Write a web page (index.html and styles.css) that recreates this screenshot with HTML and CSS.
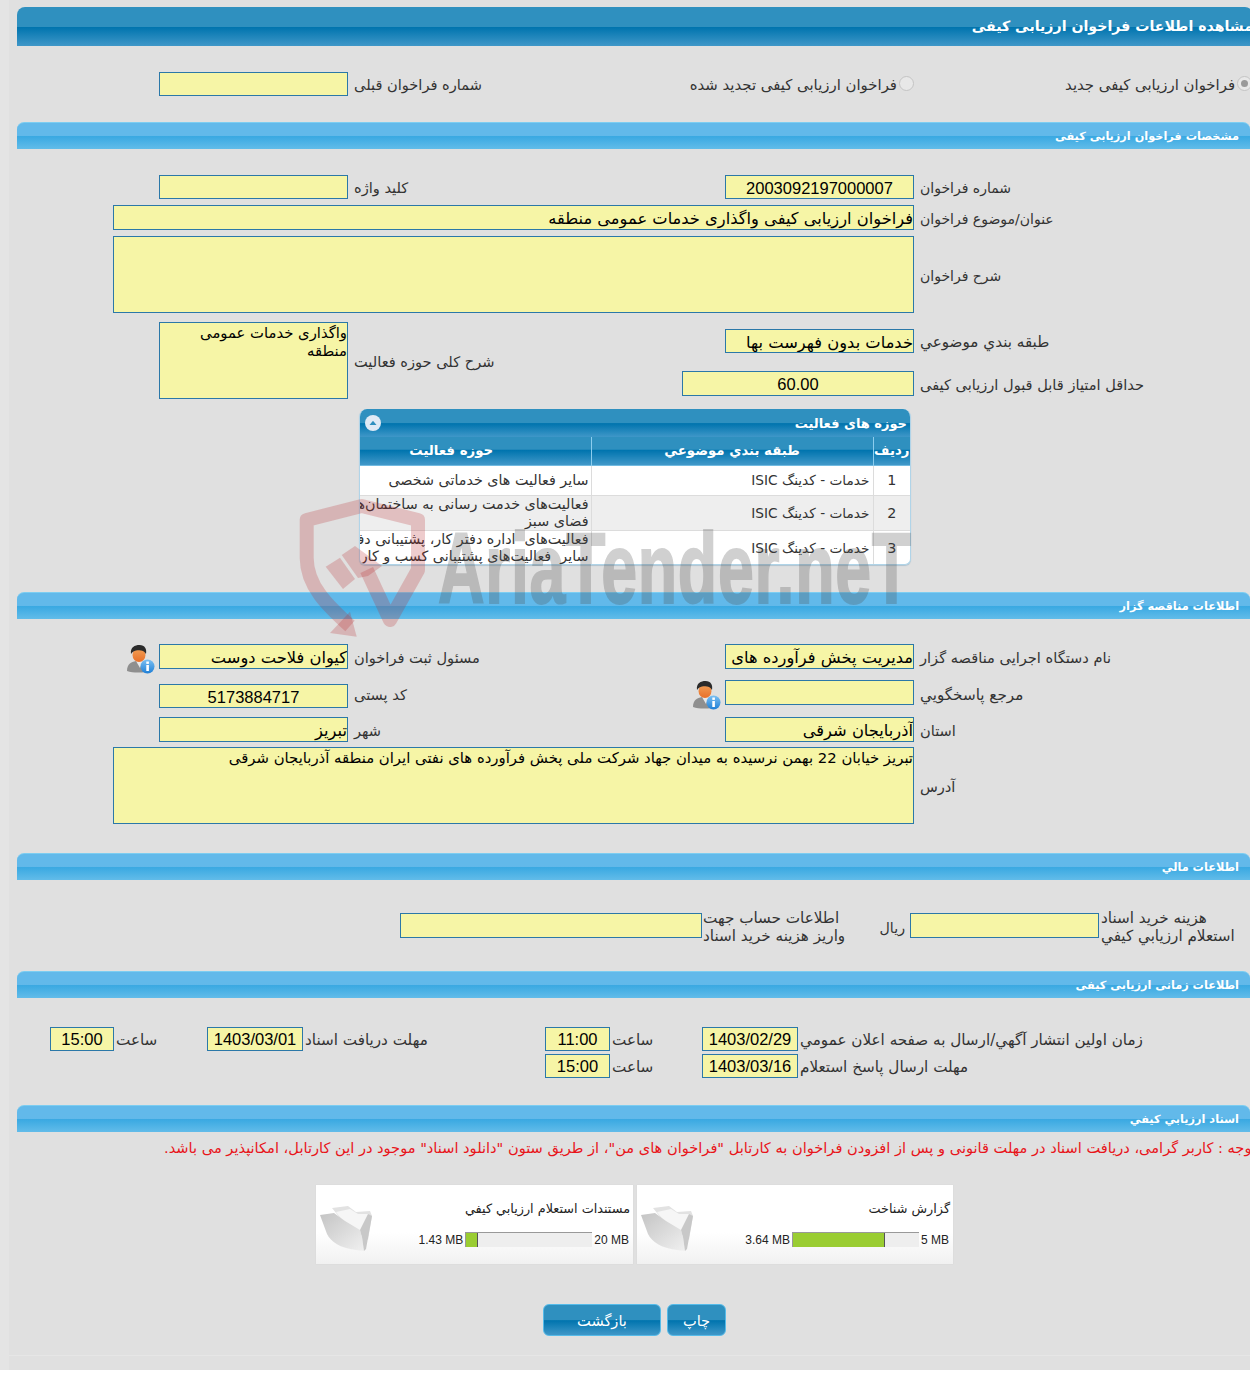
FILE: index.html
```html
<!DOCTYPE html>
<html lang="fa">
<head>
<meta charset="utf-8">
<title>مشاهده اطلاعات فراخوان ارزیابی کیفی</title>
<link rel="stylesheet" href="styles.css">
</head>
<body>
<div class="page">
<main class="main">
  <h1 class="title-bar">مشاهده اطلاعات فراخوان ارزیابی کیفی</h1>

  <div class="row radio-row">
    <div class="field c-left"></div>
    <div class="label l-left">شماره فراخوان قبلی</div>
    <div class="radio-opt r-mid"><span class="radio"></span><span>فراخوان ارزیابی کیفی تجدید شده</span></div>
    <div class="radio-opt r-right"><span class="radio checked"></span><span>فراخوان ارزیابی کیفی جدید</span></div>
  </div>

  <h2 class="sec-head">مشخصات فراخوان ارزیابی کیفی</h2>
  <div class="sec-body">
    <div class="row gap6">
      <div class="field c-left"></div>
      <div class="label l-left">کلید واژه</div>
      <div class="field c-right num">2003092197000007</div>
      <div class="label l-right sm">شماره فراخوان</div>
    </div>
    <div class="row gap6">
      <div class="field wide h25 val">فراخوان ارزیابی کیفی واگذاری خدمات عمومی منطقه</div>
      <div class="label l-right sm">عنوان/موضوع فراخوان</div>
    </div>
    <div class="row gap9">
      <div class="field wide area"></div>
      <div class="label l-right sm">شرح فراخوان</div>
    </div>
    <div class="row block-row">
      <div class="field c-left area span-all val-wrap">واگذاری خدمات عمومی منطقه</div>
      <div class="label l-left span-all">شرح کلی حوزه فعالیت</div>
      <div class="field c-right val row-2">خدمات بدون فهرست بها</div>
      <div class="label l-right row-2 lg">طبقه بندي موضوعي</div>
      <div class="field score num row-4">60.00</div>
      <div class="label l-right row-4">حداقل امتیاز قابل قبول ارزیابی کیفی</div>
    </div>

    <section class="grid-box">
      <div class="grid-title">
        <span class="collapse"><svg viewBox="0 0 12 12" width="12" height="12"><path d="M2.5 8 L6 3.8 L9.5 8 Z" fill="#2f90bf"/></svg></span>
        <span>حوزه های فعالیت</span>
      </div>
      <table class="grid">
        <thead>
          <tr><th class="col-n">ردیف</th><th class="col-c">طبقه بندي موضوعي</th><th class="col-a">حوزه فعالیت</th></tr>
        </thead>
        <tbody>
          <tr class="r1"><td class="n">1</td><td class="t">خدمات - کدینگ ISIC</td><td class="a"><div>سایر فعالیت های خدماتی شخصی</div></td></tr>
          <tr class="r2 alt"><td class="n">2</td><td class="t">خدمات - کدینگ ISIC</td><td class="a"><div>فعالیت‌های خدمت رسانی به ساختمان‌ها و</div><div>فضای سبز</div></td></tr>
          <tr class="r3"><td class="n">3</td><td class="t">خدمات - کدینگ ISIC</td><td class="a"><div>فعالیت‌های&nbsp; اداره دفتر کار، پشتیبانی دفتر</div><div>سایر&nbsp; فعالیت‌های پشتیبانی کسب و کار</div></td></tr>
        </tbody>
      </table>
    </section>
  </div>

  <h2 class="sec-head">اطلاعات مناقصه گزار</h2>
  <div class="sec-body sec-body-tight">
    <div class="row gap11">
      <svg class="person p-left" viewBox="0 0 30 30" width="30" height="30"><use href="#person"/></svg>
      <div class="field c-left h25 val">کیوان فلاحت دوست</div>
      <div class="label l-left">مسئول ثبت فراخوان</div>
      <div class="field c-right h25 val">مدیریت پخش فرآورده های نفتی منطقه آذربایجان شرقی</div>
      <div class="label l-right">نام دستگاه اجرایی مناقصه گزار</div>
    </div>
    <div class="row gap9 tall">
      <div class="field c-left to-end num">5173884717</div>
      <div class="label l-left">کد پستی</div>
      <svg class="person p-mid" viewBox="0 0 30 30" width="30" height="30"><use href="#person"/></svg>
      <div class="field c-right h25 to-start"></div>
      <div class="label l-right lg">مرجع پاسخگويي</div>
    </div>
    <div class="row gap5">
      <div class="field c-left h25 val">تبریز</div>
      <div class="label l-left">شهر</div>
      <div class="field c-right h25 val">آذربایجان شرقی</div>
      <div class="label l-right">استان</div>
    </div>
    <div class="row">
      <div class="field wide area val-line">تبریز خیابان 22 بهمن نرسیده به میدان جهاد شرکت ملی پخش فرآورده های نفتی ایران منطقه آذربایجان شرقی</div>
      <div class="label l-right">آدرس</div>
    </div>
  </div>

  <h2 class="sec-head head-fin">اطلاعات مالي</h2>
  <div class="fin-row">
    <div class="field fin-a"></div>
    <div class="label fin-l1">اطلاعات حساب جهت<br>واریز هزینه خرید اسناد</div>
    <div class="label fin-u">ريال</div>
    <div class="field fin-b"></div>
    <div class="label fin-l2">هزینه خرید اسناد<br>استعلام ارزیابي کیفي</div>
  </div>

  <h2 class="sec-head">اطلاعات زمانی ارزیابی کیفی</h2>
  <div class="time-grid">
    <div class="field num t-1">15:00</div>
    <div class="label t-2">ساعت</div>
    <div class="field num t-3">1403/03/01</div>
    <div class="label t-4">مهلت دریافت اسناد</div>
    <div class="field num t-5">11:00</div>
    <div class="label t-6">ساعت</div>
    <div class="field num t-7">1403/02/29</div>
    <div class="label t-8">زمان اولین انتشار آگهي/ارسال به صفحه اعلان عمومي</div>
    <div class="field num t-5">15:00</div>
    <div class="label t-6">ساعت</div>
    <div class="field num t-7">1403/03/16</div>
    <div class="label t-8">مهلت ارسال پاسخ استعلام</div>
  </div>

  <h2 class="sec-head">اسناد ارزیابي کیفي</h2>
  <p class="notice">توجه : کاربر گرامی، دریافت اسناد در مهلت قانونی و پس از افزودن فراخوان به کارتابل "فراخوان های من"، از طریق ستون "دانلود اسناد" موجود در این کارتابل، امکانپذیر می باشد.</p>

  <div class="cards">
    <div class="card">
      <svg class="folder" viewBox="0 0 56 48" width="56" height="48"><use href="#folder"/></svg>
      <div class="card-info">
        <div class="card-title">مستندات استعلام ارزیابي کیفي</div>
        <div class="meter-row">
          <span>1.43 MB</span>
          <div class="meter"><div class="meter-fill" style="width:9%"></div></div>
          <span>20 MB</span>
        </div>
      </div>
    </div>
    <div class="card">
      <svg class="folder" viewBox="0 0 56 48" width="56" height="48"><use href="#folder"/></svg>
      <div class="card-info">
        <div class="card-title">گزارش شناخت</div>
        <div class="meter-row">
          <span>3.64 MB</span>
          <div class="meter"><div class="meter-fill" style="width:73%"></div></div>
          <span>5 MB</span>
        </div>
      </div>
    </div>
  </div>

  <div class="buttons">
    <button class="btn btn-back" type="button">بازگشت</button>
    <button class="btn btn-print" type="button">چاپ</button>
  </div>
</main>
<div class="foot-line"></div>

<svg class="wm-shield" viewBox="0 0 132 142" width="132" height="142">
  <g fill="none" stroke="#b8292f" stroke-width="14" stroke-opacity=".24" stroke-linejoin="round">
    <path d="M52 128 C30 108 8.700 88 8.700 60 L8.700 22 L63.700 8 L120 22 L120 72 L92 122 L68.700 72"/>
  </g>
  <g fill="#b8292f" fill-opacity=".24">
    <polygon points="32,135 58.700,138.700 52,113.700"/>
    <polygon points="27.700,68.700 42,59.700 57,81 45,91"/>
    <polygon points="43.700,57 57,48 84,68 70,78 60,80"/>
  </g>
</svg>
<div class="wm-text">AriaTender.neT</div>

<svg class="defs" width="0" height="0">
  <defs>
    <linearGradient id="fg2" x1="0" y1="0" x2="1" y2="1"><stop offset="0" stop-color="#c4c4c4"/><stop offset="1" stop-color="#f0f0f0"/></linearGradient>
    <linearGradient id="pg" x1="0" y1="0" x2="0" y2="1"><stop offset="0" stop-color="#f2a056"/><stop offset="1" stop-color="#e8702a"/></linearGradient>
    <linearGradient id="ig" x1="0" y1="0" x2="0" y2="1"><stop offset="0" stop-color="#7cc0f2"/><stop offset="1" stop-color="#1f7fd6"/></linearGradient>
    <symbol id="folder" viewBox="0 0 56 48">
      <path d="M14 4 L30 2 L38 8 L52 7 L54 12 L50 36 L22 14 Z" fill="#e2e2e2"/>
      <path d="M18 8 L32 5 L40 10 L50 10 L46 32 L24 16 Z" fill="#f6f6f6"/>
      <path d="M2 11 L16 9 L27 17 L42 26 L44 33 L46 47 L38 46 C22 44 13 38 9 30 Z" fill="url(#fg2)"/>
      <path d="M42 26 L50 10 L54 12 L48 45 L46 47 L44 33 Z" fill="#c8c8c8"/>
    </symbol>
    <symbol id="person" viewBox="0 0 30 30">
      <path d="M2 27 C2 20 6 18 11 17 L19 17 C24 18 26 21 26 27 C18 29 8 29 2 27 Z" fill="#8f8f8f"/>
      <path d="M11 17 L15 24 L18 17 Z" fill="#e8e8e8"/>
      <ellipse cx="14" cy="11" rx="6.500" ry="7" fill="url(#pg)"/>
      <path d="M6 10 C5 3 10 1 14.500 1 C20 1 22 5 21 10 C19 6 15 6 11 6.500 C9 7 7 8 6 10 Z" fill="#2b2b2b"/>
      <circle cx="22.500" cy="22.500" r="7" fill="url(#ig)"/>
      <rect x="21.300" y="21" width="2.600" height="6" fill="#fff"/>
      <rect x="21.300" y="17.500" width="2.600" height="2.400" fill="#fff"/>
    </symbol>
  </defs>
</svg>
</div>
</body>
</html>
```
FILE: styles.css
```css
* { box-sizing: border-box; }
html, body { margin: 0; padding: 0; background: #fff; }
body { font-family: "DejaVu Sans", Tahoma, sans-serif; font-size: 14.600px; color: #333; }
.page { position: relative; width: 1250px; height: 1378px; overflow: hidden; background: #fff; }
.main {
  height: 1370px; width: 1250px; padding: 7px 0 0 8px; overflow: hidden;
  background: #e0e0e0;
  border-left: 9px solid #e4e4e4;
}

.title-bar {
  margin: 0 -3px 26px 0; height: 39px; padding: 0; direction: rtl;
  font-size: 14.150px; font-weight: bold; color: #fff; line-height: 39px;
  border-radius: 8px 8px 0 0; white-space: nowrap; overflow: hidden;
  background: linear-gradient(#2f90bf 0, #2f90bf 50%, #0074ae 52%, #3f97c8 100%);
}
.sec-head {
  margin: 0; height: 27px; padding: 0 11px 0 0; direction: rtl;
  font-size: 11.300px; font-weight: bold; color: #fff; line-height: 27px;
  border-radius: 7px 7px 0 0; border-top: 1px solid #7ccdf1;
  background: linear-gradient(#62b9ea 0, #62b9ea 48%, #3aa9e2 52%, #62bce9 100%);
}
.sec-body { padding-top: 26px; }
.sec-body-tight { padding-top: 25px; }

.row {
  display: grid; align-items: center;
  grid-template-columns: 96px 46px 189px 377px 189px 1fr;
}
.gap5 { margin-bottom: 5px; }
.gap6 { margin-bottom: 6px; }
.gap9 { margin-bottom: 9px; }
.gap11 { margin-bottom: 11px; }
.radio-row { margin-bottom: 26px; }
.tall { grid-template-rows: 28px; }
.to-start { align-self: start; }
.to-end { align-self: end; }

.field {
  height: 24px; background: #f6f5a6; border: 1px solid #2b78a8; overflow: hidden;
  direction: rtl; color: #000;
}
.h25 { height: 25px; }
.c-left { grid-column: 3; grid-row: 1; }
.c-right { grid-column: 5; grid-row: 1; }
.wide { grid-column: 2 / 6; grid-row: 1; }
.area { height: 77px; }
.label { direction: rtl; text-align: left; white-space: nowrap; line-height: 18px; padding-top: 2px; }
.sm { font-size: 14px; }
.lg { font-size: 15.200px; }
.l-left { grid-column: 4; grid-row: 1; padding-left: 6px; justify-self: start; }
.l-right { grid-column: 6; grid-row: 1; padding-left: 6px; justify-self: start; }
.num { text-align: center; font-family: "Liberation Sans", sans-serif; font-size: 16.500px; line-height: 24px; }
.val { font-size: 16.300px; line-height: 25px; white-space: nowrap; }
.val-wrap { font-size: 14.800px; line-height: 18px; padding-top: 1px; }
.val-line { font-size: 14.850px; line-height: 20px; white-space: nowrap; }

.radio-opt { display: flex; align-items: center; gap: 2px; direction: rtl; white-space: nowrap; grid-row: 1; height: 24px; font-size: 14.900px; padding-top: 2px; }
.r-mid { grid-column: 4 / 6; justify-self: end; }
.r-right { grid-column: 6; justify-self: end; margin-right: -2px; }
.radio { width: 15px; height: 15px; border-radius: 50%; border: 1px solid #c4c4c4; background: #e8e8e8; margin-top: -3px; position: relative; }
.radio.checked::after { content: ""; position: absolute; inset: 3px; border-radius: 50%; background: #9a9a9a; }

.block-row { grid-template-rows: 7px 24px 18px 25px 3px; margin-bottom: 10px; }
.span-all { grid-row: 1 / -1; }
.row-2 { grid-row: 2; }
.row-4 { grid-row: 4; }
.score { grid-column: 4 / 6; justify-self: end; width: 232px; height: 25px; }

.grid-box {
  margin: 0 0 27px 342px; width: 552px; height: 156px; border: 1px solid #b0d4e8; border-top: 0;
  border-radius: 8px 8px 6px 6px; overflow: hidden; background: #fff; box-shadow: 0 1px 1px #b0c4d0;
}
.grid-title {
  height: 28px; display: flex; justify-content: space-between; align-items: center;
  padding: 0 3px 0 5px; color: #fff; font-weight: bold; font-size: 13px; direction: ltr;
  background: linear-gradient(#2f90bf 0, #2f90bf 50%, #0074ae 52%, #3f97c8 100%);
}
.grid-title span:last-child { direction: rtl; }
.collapse { width: 16px; height: 16px; border-radius: 50%; background: #dfeaf5; display: flex; align-items: center; justify-content: center; }
.grid { width: 100%; border-collapse: collapse; table-layout: fixed; direction: rtl; color: #333; }
.grid th {
  height: 29px; color: #fff; font-size: 13.300px; padding: 0 0 3px; border-right: 1px solid #8ccdee; border-left: 0;
  background: linear-gradient(#2f90bf 0, #2f90bf 42%, #0074ae 46%, #3f97c8 95%, #8ccdee 100%);
}
.grid th:first-child { border-right: 0; }
.col-n { width: 37px; }
.col-c { width: 282px; }
.grid th.col-a { padding-right: 48px; }
.grid td { padding: 0; border-right: 1px solid #dcdcdc; border-bottom: 1px solid #dcdcdc; font-size: 14.300px; }
.grid td:first-child { border-right: 0; }
.r1 { height: 29px; }
.r2 { height: 34px; }
.r3 { height: 35px; }
.alt td { background: #eee; }
.n { text-align: center; }
.grid td.t { padding-right: 3px; direction: rtl; font-size: 13.700px; }
.grid td.a { padding-right: 2px; overflow: hidden; }
.a div { white-space: nowrap; line-height: 17px; }

.head-fin { margin-top: 29px; }
.fin-row {
  display: grid; grid-template-columns: 383px 302px 208px 189px 1fr; height: 91px; padding-top: 27px; align-items: start;
}
.fin-a, .fin-b { height: 25px; margin-top: 6px; grid-row: 1; }
.fin-a { grid-column: 2; }
.fin-b { grid-column: 4; }
.fin-row .label { font-size: 15.200px; }
.fin-l1 { grid-column: 3; grid-row: 1; padding-left: 1px; justify-self: start; }
.fin-row .fin-u { grid-column: 3; grid-row: 1; justify-self: end; margin: 10px 5px 0 0; font-size: 14.200px; }
.fin-l2 { grid-column: 5; grid-row: 1; padding-left: 2px; justify-self: start; }

.time-grid {
  display: grid; grid-template-columns: 33px 64px 93px 96px 242px 65px 92px 96px 1fr;
  grid-auto-rows: 24px; row-gap: 3px; align-items: center; padding-top: 29px; height: 107px;
}
.time-grid .label { font-size: 15.200px; }
.t-1 { grid-column: 2; } .t-2 { grid-column: 3; padding-left: 2px; justify-self: start; }
.t-3 { grid-column: 4; } .t-4 { grid-column: 5; padding-left: 2px; justify-self: start; }
.t-5 { grid-column: 6; } .t-6 { grid-column: 7; padding-left: 2px; justify-self: start; }
.t-7 { grid-column: 8; } .t-8 { grid-column: 9; padding-left: 2px; justify-self: start; }
.t-5, .t-7, .t-1, .t-3 { line-height: 23px; }

.notice { margin: 7px -6px 26px 0; direction: rtl; color: #e8141a; white-space: nowrap; line-height: 18px; height: 20px; }

.cards { display: flex; gap: 4px; margin-left: 299px; }
.card {
  width: 317px; height: 79px; display: flex; align-items: flex-start; justify-content: space-between;
  background: linear-gradient(#fff 60%, #f1f1f1 100%); box-shadow: 0 0 1px #ccc;
}
.card + .card { width: 316px; }
.folder { margin: 19px 0 0 2px; flex: none; filter: blur(.5px); }
.card-info { width: 258px; direction: rtl; padding: 15px 3px 0 0; }
.card-title { font-size: 12.800px; line-height: 18px; color: #222; }
.meter-row { direction: ltr; display: flex; justify-content: flex-end; align-items: center; gap: 2px; margin-top: 14px; padding-right: 1px; font: 12px "Liberation Sans", sans-serif; color: #222; }
.meter { width: 127px; height: 15px; background: #eee; border-top: 1px solid #999; border-left: 1px solid #999; }
.meter-fill { height: 100%; background: #9acd32; border-right: 1px solid #555; }

.buttons { display: flex; gap: 6px; margin: 40px 0 0 526px; }
.btn {
  height: 32px; border: 1px solid #55bbe9; border-radius: 6px; color: #fff; font: 14.600px "DejaVu Sans", sans-serif;
  background: linear-gradient(#2f90bf 0, #2f90bf 50%, #0074ae 52%, #3f97c8 100%); padding: 0;
}
.btn-back { width: 118px; }
.btn-print { width: 59px; }
.foot-line { position: absolute; left: 9px; right: 0; top: 1355px; height: 1px; background: #e6e6e6; }

.person { align-self: start; margin-bottom: -10px; }
.p-left { grid-column: 2; grid-row: 1; justify-self: end; margin-right: 4px; }
.p-mid { grid-column: 4; grid-row: 1; justify-self: end; margin-right: 4px; }

.wm-shield { position: absolute; left: 298px; top: 498px; }
.wm-text {
  position: absolute; left: 438px; top: 511px; white-space: nowrap; pointer-events: none;
  font: bold 100px "Liberation Sans Narrow", "Liberation Sans", sans-serif; color: #4d4d4d; opacity: .26;
  -webkit-text-stroke: 2px #4d4d4d;
  transform-origin: left top; transform: scaleX(.645); line-height: 115px; letter-spacing: 1px;
}
.defs { position: absolute; }
```
